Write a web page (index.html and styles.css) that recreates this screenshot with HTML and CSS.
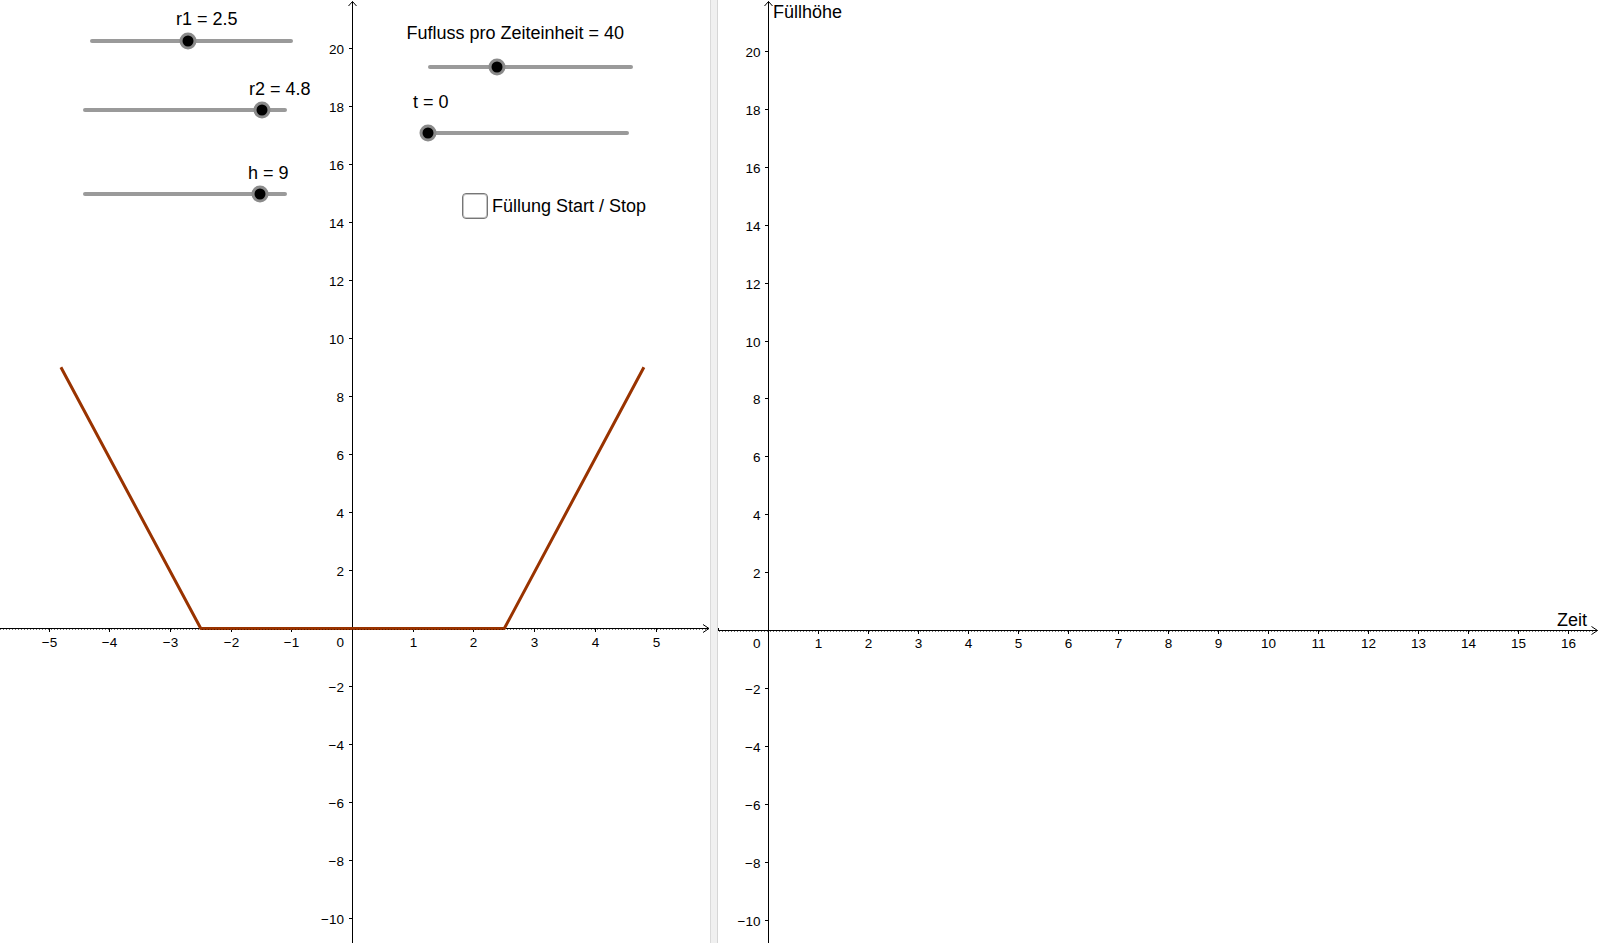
FILE: index.html
```html
<!DOCTYPE html>
<html lang="de">
<head>
<meta charset="utf-8">
<title>Füllgraph</title>
<link rel="stylesheet" href="styles.css">
</head>
<body>
<div class="app">
  <section class="view view-left">
    <svg class="plot" width="710" height="943" viewBox="0 0 710 943" xmlns="http://www.w3.org/2000/svg">
      <!-- axes -->
      <line class="axis" x1="0" y1="628.5" x2="709" y2="628.5"/>
      <line class="axis-dots" x1="0" y1="629.5" x2="706" y2="629.5"/>
      <polyline class="arrow" points="703,624.5 709,628.5 703,632.5"/>
      <line class="axis" x1="352.5" y1="1.5" x2="352.5" y2="943"/>
      <polyline class="arrow" points="348.5,6 352.5,1.5 356.5,6"/>
      <!-- x ticks -->
      <g class="ticks">
        <line x1="49.5" y1="628.5" x2="49.5" y2="632"/>
        <line x1="109.5" y1="628.5" x2="109.5" y2="632"/>
        <line x1="170.5" y1="628.5" x2="170.5" y2="632"/>
        <line x1="231.5" y1="628.5" x2="231.5" y2="632"/>
        <line x1="291.5" y1="628.5" x2="291.5" y2="632"/>
        <line x1="413.5" y1="628.5" x2="413.5" y2="632"/>
        <line x1="473.5" y1="628.5" x2="473.5" y2="632"/>
        <line x1="534.5" y1="628.5" x2="534.5" y2="632"/>
        <line x1="595.5" y1="628.5" x2="595.5" y2="632"/>
        <line x1="656.5" y1="628.5" x2="656.5" y2="632"/>
      </g>
      <g class="tick-label mid">
        <text x="49.5" y="646.5">−5</text>
        <text x="109.5" y="646.5">−4</text>
        <text x="170.5" y="646.5">−3</text>
        <text x="231.5" y="646.5">−2</text>
        <text x="291.5" y="646.5">−1</text>
        <text x="413.5" y="646.5">1</text>
        <text x="473.5" y="646.5">2</text>
        <text x="534.5" y="646.5">3</text>
        <text x="595.5" y="646.5">4</text>
        <text x="656.5" y="646.5">5</text>
      </g>
      <text class="tick-label end" x="344" y="646.5">0</text>
      <!-- y ticks -->
      <g class="ticks">
        <line x1="349" y1="48.5" x2="352.5" y2="48.5"/>
        <line x1="349" y1="106.5" x2="352.5" y2="106.5"/>
        <line x1="349" y1="164.5" x2="352.5" y2="164.5"/>
        <line x1="349" y1="222.5" x2="352.5" y2="222.5"/>
        <line x1="349" y1="280.5" x2="352.5" y2="280.5"/>
        <line x1="349" y1="338.5" x2="352.5" y2="338.5"/>
        <line x1="349" y1="396.5" x2="352.5" y2="396.5"/>
        <line x1="349" y1="454.5" x2="352.5" y2="454.5"/>
        <line x1="349" y1="512.5" x2="352.5" y2="512.5"/>
        <line x1="349" y1="570.5" x2="352.5" y2="570.5"/>
        <line x1="349" y1="686.5" x2="352.5" y2="686.5"/>
        <line x1="349" y1="744.5" x2="352.5" y2="744.5"/>
        <line x1="349" y1="802.5" x2="352.5" y2="802.5"/>
        <line x1="349" y1="860.5" x2="352.5" y2="860.5"/>
        <line x1="349" y1="918.5" x2="352.5" y2="918.5"/>
      </g>
      <g class="tick-label end">
        <text x="344" y="53.5">20</text>
        <text x="344" y="111.5">18</text>
        <text x="344" y="169.5">16</text>
        <text x="344" y="227.5">14</text>
        <text x="344" y="285.5">12</text>
        <text x="344" y="343.5">10</text>
        <text x="344" y="401.5">8</text>
        <text x="344" y="459.5">6</text>
        <text x="344" y="517.5">4</text>
        <text x="344" y="575.5">2</text>
        <text x="344" y="691.5">−2</text>
        <text x="344" y="749.5">−4</text>
        <text x="344" y="807.5">−6</text>
        <text x="344" y="865.5">−8</text>
        <text x="344" y="923.5">−10</text>
      </g>
      <!-- profile -->
      <polyline class="profile" points="60.9,367.3 200.8,628.5 504.3,628.5 643.9,367.3"/>
      <line class="profile-dots" x1="202" y1="629.5" x2="503" y2="629.5"/>
    </svg>

    <div class="label lbl-r1">r1 = 2.5</div>
    <div class="slider sl-r1"><span class="knob" style="left: 98.3px"></span></div>

    <div class="label lbl-r2">r2 = 4.8</div>
    <div class="slider sl-r2"><span class="knob" style="left: 178.4px"></span></div>

    <div class="label lbl-h">h = 9</div>
    <div class="slider sl-h"><span class="knob" style="left: 177px"></span></div>

    <div class="label lbl-flow">Fufluss pro Zeiteinheit = 40</div>
    <div class="slider sl-flow"><span class="knob" style="left: 68.4px"></span></div>

    <div class="label lbl-t">t = 0</div>
    <div class="slider sl-t"><span class="knob" style="left: 2.4px"></span></div>

    <label class="check">
      <span class="check-box"></span>
      <span class="check-text">Füllung Start / Stop</span>
    </label>
  </section>

  <div class="divider"></div>

  <section class="view view-right">
    <svg class="plot" width="882" height="943" viewBox="0 0 882 943" xmlns="http://www.w3.org/2000/svg">
      <line class="axis" x1="0" y1="630.5" x2="879.5" y2="630.5"/>
      <line class="axis-dots" x1="1" y1="631.5" x2="876" y2="631.5"/>
      <polyline class="arrow" points="873.5,626.5 879.5,630.5 873.5,634.5"/>
      <line class="axis" x1="0.5" y1="628" x2="0.5" y2="631"/>
      <line class="axis" x1="50.5" y1="1.5" x2="50.5" y2="943"/>
      <polyline class="arrow" points="46.5,6 50.5,1.5 54.5,6"/>
      <g class="ticks">
        <line x1="100.5" y1="630.5" x2="100.5" y2="634"/>
        <line x1="150.5" y1="630.5" x2="150.5" y2="634"/>
        <line x1="200.5" y1="630.5" x2="200.5" y2="634"/>
        <line x1="250.5" y1="630.5" x2="250.5" y2="634"/>
        <line x1="300.5" y1="630.5" x2="300.5" y2="634"/>
        <line x1="350.5" y1="630.5" x2="350.5" y2="634"/>
        <line x1="400.5" y1="630.5" x2="400.5" y2="634"/>
        <line x1="450.5" y1="630.5" x2="450.5" y2="634"/>
        <line x1="500.5" y1="630.5" x2="500.5" y2="634"/>
        <line x1="550.5" y1="630.5" x2="550.5" y2="634"/>
        <line x1="600.5" y1="630.5" x2="600.5" y2="634"/>
        <line x1="650.5" y1="630.5" x2="650.5" y2="634"/>
        <line x1="700.5" y1="630.5" x2="700.5" y2="634"/>
        <line x1="750.5" y1="630.5" x2="750.5" y2="634"/>
        <line x1="800.5" y1="630.5" x2="800.5" y2="634"/>
        <line x1="850.5" y1="630.5" x2="850.5" y2="634"/>
      </g>
      <g class="tick-label mid">
        <text x="100.5" y="647.5">1</text>
        <text x="150.5" y="647.5">2</text>
        <text x="200.5" y="647.5">3</text>
        <text x="250.5" y="647.5">4</text>
        <text x="300.5" y="647.5">5</text>
        <text x="350.5" y="647.5">6</text>
        <text x="400.5" y="647.5">7</text>
        <text x="450.5" y="647.5">8</text>
        <text x="500.5" y="647.5">9</text>
        <text x="550.5" y="647.5">10</text>
        <text x="600.5" y="647.5">11</text>
        <text x="650.5" y="647.5">12</text>
        <text x="700.5" y="647.5">13</text>
        <text x="750.5" y="647.5">14</text>
        <text x="800.5" y="647.5">15</text>
        <text x="850.5" y="647.5">16</text>
      </g>
      <text class="tick-label end" x="42.5" y="647.5">0</text>
      <g class="ticks">
        <line x1="47" y1="51.5" x2="50.5" y2="51.5"/>
        <line x1="47" y1="109.5" x2="50.5" y2="109.5"/>
        <line x1="47" y1="167.5" x2="50.5" y2="167.5"/>
        <line x1="47" y1="225.5" x2="50.5" y2="225.5"/>
        <line x1="47" y1="283.5" x2="50.5" y2="283.5"/>
        <line x1="47" y1="341.5" x2="50.5" y2="341.5"/>
        <line x1="47" y1="398.5" x2="50.5" y2="398.5"/>
        <line x1="47" y1="456.5" x2="50.5" y2="456.5"/>
        <line x1="47" y1="514.5" x2="50.5" y2="514.5"/>
        <line x1="47" y1="572.5" x2="50.5" y2="572.5"/>
        <line x1="47" y1="688.5" x2="50.5" y2="688.5"/>
        <line x1="47" y1="746.5" x2="50.5" y2="746.5"/>
        <line x1="47" y1="804.5" x2="50.5" y2="804.5"/>
        <line x1="47" y1="862.5" x2="50.5" y2="862.5"/>
        <line x1="47" y1="920.5" x2="50.5" y2="920.5"/>
      </g>
      <g class="tick-label end">
        <text x="42.5" y="56.5">20</text>
        <text x="42.5" y="114.5">18</text>
        <text x="42.5" y="172.5">16</text>
        <text x="42.5" y="230.5">14</text>
        <text x="42.5" y="288.5">12</text>
        <text x="42.5" y="346.5">10</text>
        <text x="42.5" y="403.5">8</text>
        <text x="42.5" y="461.5">6</text>
        <text x="42.5" y="519.5">4</text>
        <text x="42.5" y="577.5">2</text>
        <text x="42.5" y="693.5">−2</text>
        <text x="42.5" y="751.5">−4</text>
        <text x="42.5" y="809.5">−6</text>
        <text x="42.5" y="867.5">−8</text>
        <text x="42.5" y="925.5">−10</text>
      </g>
      <text class="axis-name" x="55" y="18">Füllhöhe</text>
      <text class="axis-name" x="839" y="625.5">Zeit</text>
    </svg>
  </section>
</div>
</body>
</html>
```

FILE: styles.css
```css
html, body {
  margin: 0;
  padding: 0;
  background: #ffffff;
}

body {
  font-family: "Liberation Sans", Arial, sans-serif;
  color: #000000;
  overflow: hidden;
}

.app {
  display: flex;
  width: 1600px;
  height: 943px;
}

.view {
  position: relative;
  height: 943px;
  overflow: hidden;
  background: #ffffff;
}

.view-left {
  width: 710px;
  flex: 0 0 710px;
}

.view-right {
  flex: 1 1 auto;
}

.divider {
  flex: 0 0 8px;
  box-sizing: border-box;
  background: #f0f0f0;
  border-left: 1px solid #dadada;
  border-right: 1px solid #d6d6d6;
}

.plot {
  display: block;
}

.axis {
  stroke: #000000;
  stroke-width: 1;
  fill: none;
}

.axis-dots {
  stroke: #000000;
  stroke-width: 1;
  stroke-dasharray: 1 2;
  opacity: 0.55;
}

.arrow {
  fill: none;
  stroke: #000000;
  stroke-width: 1;
}

.ticks line {
  stroke: #000000;
  stroke-width: 1;
}

.tick-label {
  font-family: "Liberation Sans", Arial, sans-serif;
  font-size: 13.5px;
  fill: #000000;
}

.tick-label.mid,
.mid text {
  text-anchor: middle;
}

.tick-label.end,
.end text {
  text-anchor: end;
}

.axis-name {
  font-family: "Liberation Sans", Arial, sans-serif;
  font-size: 18px;
  fill: #000000;
}

.profile {
  fill: none;
  stroke: #993300;
  stroke-width: 3;
  stroke-linejoin: round;
}

.profile-dots {
  stroke: #3a1200;
  stroke-width: 1;
  stroke-dasharray: 1 2;
  opacity: 0.7;
}

/* slider widgets on the canvas */
.label {
  position: absolute;
  font-size: 18px;
  line-height: 18px;
  white-space: nowrap;
}

.lbl-r1 { left: 176px; top: 10px; }
.lbl-r2 { left: 249px; top: 80px; }
.lbl-h { left: 248px; top: 164px; }
.lbl-flow { left: 406.5px; top: 24px; }
.lbl-t { left: 413px; top: 93px; }

.slider {
  position: absolute;
  height: 4px;
  border-radius: 2px;
  background: #9a9a9a;
}

.sl-r1 { left: 90px; top: 38.7px; width: 203px; }
.sl-r2 { left: 83.3px; top: 108px; width: 204px; }
.sl-h { left: 83.3px; top: 192px; width: 204px; }
.sl-flow { left: 428.3px; top: 64.7px; width: 204.4px; }
.sl-t { left: 425.3px; top: 131.3px; width: 204px; }

.knob {
  position: absolute;
  top: 50%;
  width: 11px;
  height: 11px;
  border-radius: 50%;
  background: #000000;
  box-shadow: 0 0 0 3px #8a8a8a;
  transform: translate(-50%, -50%);
}

.check {
  position: absolute;
  left: 462px;
  top: 193px;
  display: flex;
  align-items: center;
  gap: 4px;
}

.check-box {
  box-sizing: border-box;
  width: 26px;
  height: 26px;
  border: 1px solid #767676;
  border-radius: 4px;
  box-shadow: inset 0 0 0 1px #c4c4c4;
  background: #ffffff;
}

.check-text {
  font-size: 18px;
  line-height: 18px;
  white-space: nowrap;
}
```
